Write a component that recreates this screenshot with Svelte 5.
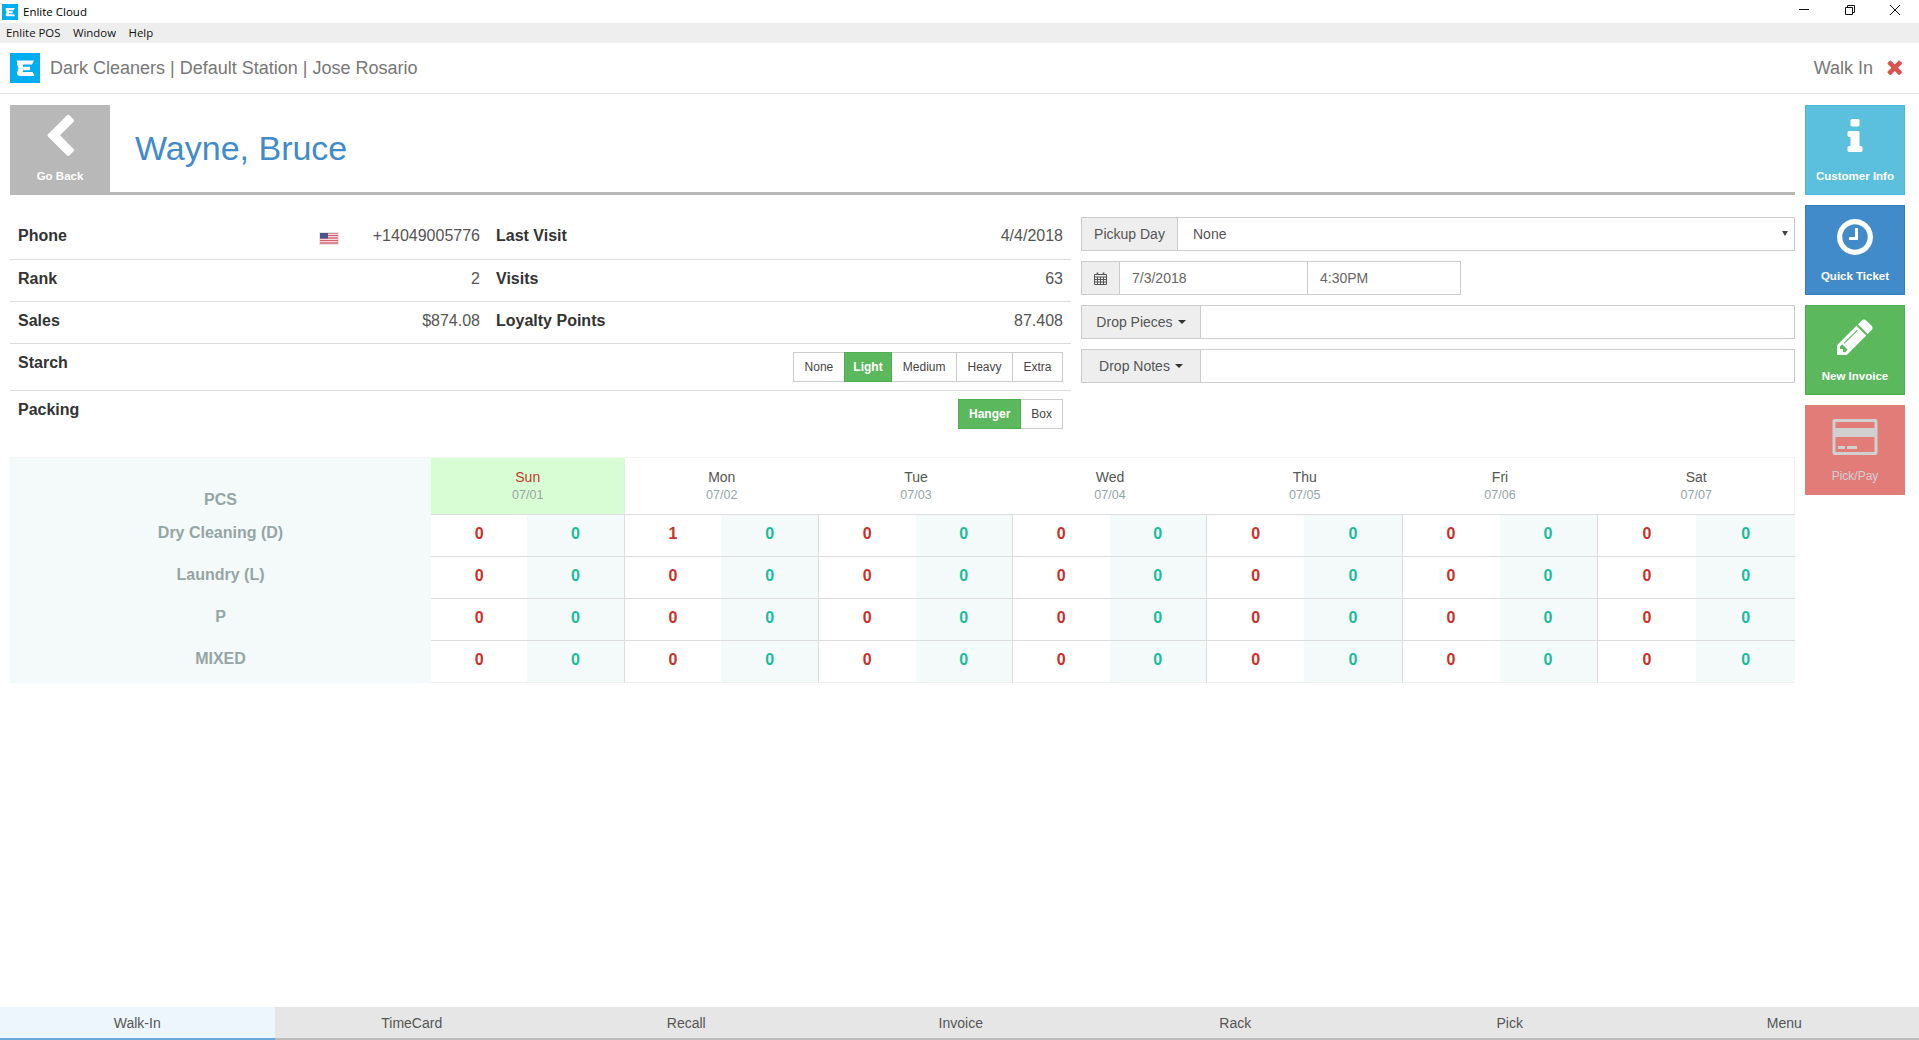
<script>
  const P = {
    chevron: 'M1427 301l-531 531 531 531q19 19 19 45t-19 45l-166 166q-19 19-45 19t-45-19l-742-742q-19-19-19-45t19-45l742-742q19-19 45-19t45 19l166 166q19 19 19 45t-19 45z',
    info: 'M1216 1344v128q0 26-19 45t-45 19h-512q-26 0-45-19t-19-45v-128q0-26 19-45t45-19h64v-384h-64q-26 0-45-19t-19-45v-128q0-26 19-45t45-19h384q26 0 45 19t19 45v576h64q26 0 45 19t19 45zm-128-1152v192q0 26-19 45t-45 19h-256q-26 0-45-19t-19-45v-192q0-26 19-45t45-19h256q26 0 45 19t19 45z',
    clock: 'M1024 544v448q0 14-9 23t-23 9h-320q-14 0-23-9t-9-23v-64q0-14 9-23t23-9h224v-352q0-14 9-23t23-9h64q14 0 23 9t9 23zm416 352q0-148-73-273t-198-198-273-73-273 73-198 198-73 273 73 273 198 198 273 73 273-73 198-198 73-273zm224 0q0 209-103 385.5t-279.5 279.5-385.5 103-385.5-103-279.5-279.5-103-385.5 103-385.5 279.5-279.5 385.5-103 385.5 103 279.5 279.5 103 385.5z',
    pencil: 'M491 1536l91-91-235-235-91 91v107h128v128h107zm523-928q0-22-22-22-10 0-17 7l-542 542q-7 7-7 17 0 22 22 22 10 0 17-7l542-542q7-7 7-17zm-54-192l416 416-832 832h-416v-416zm683 96q0 53-37 90l-166 166-416-416 166-165q36-38 90-38 53 0 91 38l235 234q37 39 37 91z',
    times: 'M1490 1322q0 40-28 68l-136 136q-28 28-68 28t-68-28l-294-294-294 294q-28 28-68 28t-68-28l-136-136q-28-28-28-68t28-68l294-294-294-294q-28-28-28-68t28-68l136-136q28-28 68-28t68 28l294 294 294-294q28-28 68-28t68 28l136 136q28 28 28 68t-28 68l-294 294 294 294q28 28 28 68z'
  };
  const LOGO = 'M7 7.5H24L22 11.5H13V13.8H20V17.2H13V19H22.5L24.5 23H10.5C8 23 6.5 21.5 7 19.5L8.5 15.5L7 11.5Z';

  const days = [
    { d: 'Sun', date: '07/01', today: true },
    { d: 'Mon', date: '07/02' },
    { d: 'Tue', date: '07/03' },
    { d: 'Wed', date: '07/04' },
    { d: 'Thu', date: '07/05' },
    { d: 'Fri', date: '07/06' },
    { d: 'Sat', date: '07/07' }
  ];
  const rows = [
    { name: 'Dry Cleaning (D)', vals: [0, 1, 0, 0, 0, 0, 0] },
    { name: 'Laundry (L)', vals: [0, 0, 0, 0, 0, 0, 0] },
    { name: 'P', vals: [0, 0, 0, 0, 0, 0, 0] },
    { name: 'MIXED', vals: [0, 0, 0, 0, 0, 0, 0] }
  ];
  const starch = ['None', 'Light', 'Medium', 'Heavy', 'Extra'];
  const packing = ['Hanger', 'Box'];
  const tabs = ['Walk-In', 'TimeCard', 'Recall', 'Invoice', 'Rack', 'Pick', 'Menu'];
</script>

<div class="app">
  <div class="titlebar">
    <svg class="tb-logo" viewBox="0 0 30 30"><rect width="30" height="30" fill="#00aeef" /><path d={LOGO} fill="#fff" /></svg>
    <span class="tb-title">Enlite Cloud</span>
    <div class="winctl">
      <svg viewBox="0 0 12 12" width="12" height="12"><path d="M1 5.5H11" stroke="#111" fill="none" /></svg>
      <svg viewBox="0 0 12 12" width="12" height="12"><path d="M1.5 3.5H8.5V10.5H1.5ZM3.5 3.5V1.5H10.5V8.5H8.5" stroke="#111" fill="none" /></svg>
      <svg viewBox="0 0 12 12" width="12" height="12"><path d="M1 1L11 11M11 1L1 11" stroke="#111" fill="none" /></svg>
    </div>
  </div>
  <div class="menubar">
    <span>Enlite POS</span><span>Window</span><span>Help</span>
  </div>
  <header class="header">
    <svg class="logo" viewBox="0 0 30 30"><rect width="30" height="30" fill="#00aeef" /><path d={LOGO} fill="#fff" /></svg>
    <span class="hd-text">Dark Cleaners | Default Station | Jose Rosario</span>
    <span class="hd-walk">Walk In</span>
    <svg class="hd-x" viewBox="176 240 1314 1314"><path d={P.times} fill="#d9534f" /></svg>
  </header>

  <div class="main">
    <div class="content">
      <div class="titlerow">
        <button class="tile back">
          <svg class="chev" viewBox="0 0 1792 1792"><path d={P.chevron} fill="#fff" /></svg>
          <span>Go Back</span>
        </button>
        <h1>Wayne, Bruce</h1>
      </div>

      <div class="details">
        <div class="info">
          <div class="irow">
            <div class="icell first"><b>Phone</b>
              <span class="val">
                <svg class="flag" viewBox="0 0 20 13">
                  <rect width="20" height="13" fill="#fff" />
                  <path d="M0 1H20M0 3.5H20M0 6H20M0 8.500H20M0 11H20" stroke="#d8606c" stroke-width="1.3" />
                  <rect width="9" height="6.500" fill="#4a5590" />
                  <rect x=".5" y=".5" width="19" height="12" fill="none" stroke="#e4e4e4" />
                </svg>
                <span>+14049005776</span>
              </span>
            </div>
            <div class="icell first"><b>Last Visit</b><span class="val">4/4/2018</span></div>
          </div>
          <div class="irow">
            <div class="icell"><b>Rank</b><span class="val">2</span></div>
            <div class="icell"><b>Visits</b><span class="val">63</span></div>
          </div>
          <div class="irow">
            <div class="icell"><b>Sales</b><span class="val">$874.08</span></div>
            <div class="icell"><b>Loyalty Points</b><span class="val">87.408</span></div>
          </div>
          <div class="irow opt">
            <b class="optlabel">Starch</b>
            <div class="btngroup starch">
              {#each starch as s}
                <button class:on={s === 'Light'}>{s}</button>
              {/each}
            </div>
          </div>
          <div class="irow opt last">
            <b class="optlabel">Packing</b>
            <div class="btngroup">
              {#each packing as s}
                <button class:on={s === 'Hanger'}>{s}</button>
              {/each}
            </div>
          </div>
        </div>

        <div class="controls">
          <div class="igroup">
            <span class="addon pickup">Pickup Day</span>
            <div class="input select"><span>None</span><i class="selarrow"></i></div>
          </div>
          <div class="igroup narrow">
            <span class="addon cal">
              <svg viewBox="0 0 13 13" width="13" height="13">
                <path d="M.5 2.500H12.500V12.500H.5ZM.5 5H12.500M.5 7.500H12.500M.5 10H12.500M3.500 5V12.500M6.500 5V12.500M9.500 5V12.500" stroke="#555" fill="none" />
                <path d="M3.500 .5V3M9.500 .5V3" stroke="#555" stroke-width="1.600" fill="none" />
              </svg>
            </span>
            <div class="input date">7/3/2018</div>
            <div class="input time">4:30PM</div>
          </div>
          <div class="igroup">
            <span class="addon drop">Drop Pieces<i class="caret"></i></span>
            <div class="input"></div>
          </div>
          <div class="igroup">
            <span class="addon drop">Drop Notes<i class="caret"></i></span>
            <div class="input"></div>
          </div>
        </div>
      </div>

      <div class="sched">
        <div class="lab pcs">PCS</div>
        {#each days as day}
          <div class="dayhead" class:today={day.today}>
            <span class="dname">{day.d}</span>
            <span class="ddate">{day.date}</span>
          </div>
        {/each}
        {#each rows as row, r}
          <div class="lab">{row.name}</div>
          {#each row.vals as v, i}
            <div class="daycell" class:endcol={i === 6} class:endrow={r === rows.length - 1}>
              <span class="n red">{v}</span>
              <span class="n teal">0</span>
            </div>
          {/each}
        {/each}
      </div>
    </div>

    <aside class="side">
      <button class="tile info-b">
        <svg class="ico" viewBox="0 0 1792 1792"><path d={P.info} fill="#fff" /></svg>
        <span>Customer Info</span>
      </button>
      <button class="tile prim">
        <svg class="ico" viewBox="0 0 1792 1792"><path d={P.clock} fill="#fff" /></svg>
        <span>Quick Ticket</span>
      </button>
      <button class="tile succ">
        <svg class="ico" viewBox="0 0 1792 1792"><path d={P.pencil} fill="#fff" /></svg>
        <span>New Invoice</span>
      </button>
      <button class="tile dang">
        <svg class="ico card" viewBox="0 0 42 42">
          <path fill="#d0d0d0" fill-rule="evenodd" d="M.5 3H41.500Q43.500 3 43.500 5V37Q43.500 39 41.500 39H.5Q-1.500 39 -1.500 37V5Q-1.500 3 .5 3ZM1.500 6V12H40.500V6ZM1.500 21V36H40.500V21ZM4 30H11V33H4ZM13 30H23V33H13Z" />
        </svg>
        <span>Pick/Pay</span>
      </button>
    </aside>
  </div>

  <nav class="tabs">
    {#each tabs as t, i}
      <div class="tab" class:active={i === 0}>{t}</div>
    {/each}
  </nav>
</div>

<style>
  :global(body) {
    margin: 0;
    background: #fff;
  }
  .app {
    width: 1919px;
    height: 1040px;
    overflow: hidden;
    display: flex;
    flex-direction: column;
    font-family: 'Liberation Sans', Arial, sans-serif;
    font-size: 14px;
    color: #555;
    background: #fff;
  }
  .titlebar {
    height: 23px;
    display: flex;
    align-items: center;
    padding-left: 2px;
    font-family: 'Open Sans', sans-serif;
    font-size: 11.5px;
    color: #000;
  }
  .tb-logo {
    width: 16px;
    height: 16px;
    margin-right: 5px;
  }
  .winctl {
    margin-left: auto;
    margin-right: 18px;
    display: flex;
    gap: 33.5px;
    margin-top: -3px;
  }
  .winctl svg {
    display: block;
  }
  .menubar {
    height: 20px;
    box-sizing: border-box;
    padding-bottom: 2px;
    background: #eee;
    display: flex;
    align-items: center;
    gap: 12.5px;
    padding-left: 6px;
    font-family: 'Open Sans', sans-serif;
    font-size: 11.4px;
    color: #111;
  }
  .header {
    height: 50px;
    border-bottom: 1px solid #e7e7e7;
    display: flex;
    align-items: center;
    padding: 0 17px 0 10px;
    font-size: 18px;
    color: #777;
  }
  .logo {
    width: 30px;
    height: 30px;
    margin-right: 10px;
  }
  .hd-walk {
    margin-left: auto;
    margin-right: 13px;
  }
  .hd-x {
    width: 16px;
    height: 16px;
    margin-bottom: 2px;
  }
  .main {
    display: flex;
    gap: 10px;
    padding: 11px 14px 0 10px;
  }
  .content {
    width: 1785px;
  }
  .titlerow {
    display: flex;
    border-bottom: 3px solid #b8b8b8;
    height: 90px;
    box-sizing: border-box;
  }
  h1 {
    margin: 0 0 0 25px;
    font-size: 34px;
    font-weight: 400;
    color: #428bca;
    line-height: 87px;
  }
  .tile {
    width: 100px;
    height: 90px;
    box-sizing: border-box;
    border: 1px solid transparent;
    padding: 10px 0 0;
    margin: 0;
    display: flex;
    flex-direction: column;
    align-items: center;
    font-family: inherit;
    font-size: 11.5px;
    font-weight: 700;
    color: #fff;
    line-height: 14px;
  }
  .tile span {
    margin-top: 11px;
  }
  .ico {
    width: 42px;
    height: 42px;
    display: block;
  }
  .ico.card {
    overflow: visible;
  }
  .back {
    height: 87px;
    background: #b8b8b8;
    border-color: #b8b8b8;
    padding-top: 8px;
  }
  .back span {
    margin-top: 9px;
  }
  .chev {
    width: 46px;
    height: 46px;
    display: block;
  }
  .details {
    display: flex;
    gap: 10px;
    margin-top: 22px;
  }
  .info {
    width: 1061px;
    font-size: 16px;
    padding-top: 1px;
  }
  .irow {
    display: grid;
    grid-template-columns: 478px 583px;
    height: 42px;
    box-sizing: border-box;
    border-bottom: 1px solid #ddd;
    line-height: 20px;
  }
  .icell {
    display: flex;
    justify-content: space-between;
    padding: 9px 8px 8px;
  }
  .icell.first {
    padding-top: 8px;
  }
  b {
    font-weight: 700;
    color: #333;
    font-size: 16px;
  }
  .optlabel {
    margin-top: 1px;
  }
  .val {
    display: flex;
    align-items: center;
    gap: 34px;
    color: #555;
    height: 20px;
  }
  .flag {
    width: 20px;
    height: 13px;
    display: block;
    margin-top: 4px;
  }
  .irow.opt {
    display: flex;
    justify-content: space-between;
    padding: 8px;
    height: 47px;
  }
  .irow.last {
    border-bottom: 0;
  }
  .btngroup {
    display: flex;
    height: 30px;
  }
  .btngroup button {
    margin: 0 0 0 -1px;
    padding: 0 10px;
    border: 1px solid #ccc;
    background: #fff;
    color: #444;
    font-family: inherit;
    font-size: 12px;
    line-height: 18px;
  }
  .btngroup.starch button {
    padding: 0 10.500px;
  }
  .btngroup button.on {
    background: #5cb85c;
    border-color: #4cae4c;
    color: #fff;
    font-weight: 700;
    position: relative;
  }
  .btngroup.starch button.on {
    padding: 0 8.600px;
  }
  .controls {
    width: 714px;
    display: flex;
    flex-direction: column;
    gap: 10px;
  }
  .igroup {
    display: flex;
    height: 34px;
  }
  .igroup.narrow {
    width: 380px;
  }
  .addon {
    box-sizing: border-box;
    display: flex;
    align-items: center;
    justify-content: center;
    background: #eee;
    border: 1px solid #ccc;
    border-right: 0;
    color: #555;
    flex: none;
  }
  .pickup {
    width: 96px;
    padding-bottom: 1px;
  }
  .cal {
    width: 38px;
  }
  .drop {
    width: 119px;
    color: #555;
  }
  .input {
    flex: 1;
    box-sizing: border-box;
    border: 1px solid #ccc;
    padding: 0 12px;
    line-height: 32px;
    color: #555;
    min-width: 0;
  }
  .select {
    display: flex;
    align-items: center;
    justify-content: space-between;
    padding: 0 6px 1px 15px;
  }
  .selarrow {
    width: 0;
    height: 0;
    border: 3px solid transparent;
    border-top: 5px solid #444;
    border-bottom: 0;
  }
  .date {
    flex: none;
    width: 188px;
    border-right: 0;
    color: #666;
  }
  .time {
    color: #666;
  }
  .caret {
    display: inline-block;
    width: 0;
    height: 0;
    margin-left: 5px;
    border: 4px solid transparent;
    border-top: 4px solid #333;
    border-bottom: 0;
  }
  .sched {
    margin-top: 19px;
    display: grid;
    grid-template-columns: 421px 193.500px 194.500px 194px 194px 195.500px 195px 197.500px;
    grid-auto-rows: 42px;
    grid-template-rows: 57px;
    border-top: 1px solid #f5f5f5;
    border-right: 1px solid #f2f2f2;
    width: 1785px;
    box-sizing: border-box;
  }
  .lab {
    background: #f4f9f9;
    text-align: center;
    font-weight: 700;
    font-size: 16px;
    line-height: 20px;
    color: #95a5a6;
    padding-top: 8px;
    box-sizing: border-box;
  }
  .lab.pcs {
    padding-top: 32px;
  }
  .dayhead {
    display: flex;
    flex-direction: column;
    align-items: center;
    padding-top: 9px;
    box-sizing: border-box;
    border-bottom: 1px solid #ddd;
  }
  .dname {
    line-height: 20px;
    font-size: 14px;
    color: #555;
  }
  .ddate {
    line-height: 17px;
    font-size: 12.500px;
    color: #95a5a6;
  }
  .today {
    background: #d8fdd5;
  }
  .today .dname {
    color: #c0392b;
  }
  .daycell {
    display: grid;
    grid-template-columns: 1fr 1fr;
    border-bottom: 1px solid #ddd;
    border-right: 1px solid #ddd;
    box-sizing: border-box;
  }
  .daycell.endcol {
    border-right: 0;
  }
  .daycell.endrow {
    border-bottom: 1px solid #f0f0f0;
  }
  .n {
    text-align: center;
    font-weight: 700;
    font-size: 16px;
    line-height: 20px;
    padding-top: 9px;
  }
  .red {
    color: #c9302c;
  }
  .teal {
    color: #1abc9c;
    background: #f4f9f9;
  }
  .side {
    width: 100px;
    display: flex;
    flex-direction: column;
    gap: 10px;
  }
  .info-b {
    background: #5bc0de;
    border-color: #46b8da;
  }
  .prim {
    background: #428bca;
    border-color: #357ebd;
  }
  .succ {
    background: #5cb85c;
    border-color: #4cae4c;
  }
  .dang {
    background: #e27c79;
    border-color: #e27c79;
    color: #d0d0d0;
    font-weight: 400;
    font-size: 12px;
  }
  .tabs {
    margin-top: auto;
    height: 33px;
    display: grid;
    grid-template-columns: repeat(7, 274.500px);
    background: #e6e6e6;
    border-bottom: 2px solid #bbb;
    box-sizing: border-box;
    color: #555;
  }
  .tab {
    text-align: center;
    line-height: 32px;
    height: 33px;
    box-sizing: border-box;
  }
  .tab.active {
    background: #eef6fd;
    border-bottom: 2px solid #6aa9dc;
  }
</style>
